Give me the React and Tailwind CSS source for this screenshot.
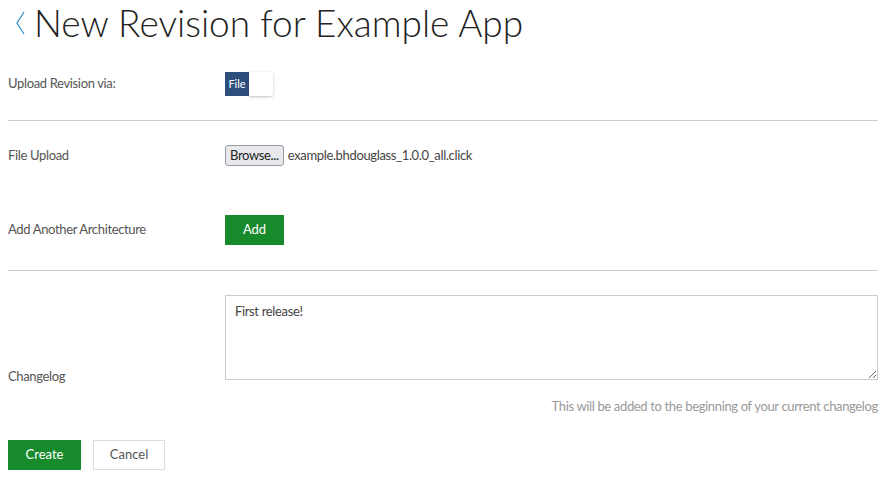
import React from 'react';

function Row({ label, children, className = '' }) {
  return (
    <div className={`flex items-center ${className}`}>
      <div className="w-[217px] shrink-0 text-[13px] tracking-[-0.35px] text-[#555]">{label}</div>
      <div className="flex-1">{children}</div>
    </div>
  );
}

export default function App() {
  return (
    <div className="pl-2 pr-[9px] bg-white min-h-screen font-['Lato',sans-serif]">
      {/* Header */}
      <div className="h-[45px] flex items-center">
        <svg width="12" height="24" viewBox="0 0 12 24" className="ml-[6px] mr-[8px]">
          <path d="M10 1 L3 12 L10 23" fill="none" stroke="#3b8fc4" strokeWidth="1.3" />
        </svg>
        <h1 className="text-[37px] font-light text-[#222] leading-none">New Revision for Example App</h1>
      </div>

      {/* Upload via */}
      <Row label="Upload Revision via:" className="mt-[27px] h-6">
        <div className="flex h-6">
          <div className="w-6 h-6 bg-[#2c4f7e] text-white text-[11px] flex items-center justify-center">File</div>
          <div className="w-6 h-6 bg-white rounded-r-[3px] shadow-[0_1px_3px_rgba(0,0,0,0.25)]"></div>
        </div>
      </Row>

      <hr className="mt-6 border-0 border-t border-[#ccc]" />

      {/* File upload */}
      <Row label="File Upload" className="mt-6 h-[21px]">
        <div className="flex items-center gap-1 text-[13px] tracking-[-0.35px] text-[#444]">
          <button className="h-[21px] px-[4px] bg-[#e9e9ed] border border-[#9a9aa5] rounded-[3px] text-[13px] tracking-[-0.35px] text-[#222]">Browse...</button>
          <span>example.bhdouglass_1.0.0_all.click</span>
        </div>
      </Row>

      {/* Add architecture */}
      <Row label="Add Another Architecture" className="mt-[49px] h-[30px]">
        <button className="h-[30px] w-[59px] bg-[#178a2b] text-white text-[13px]">Add</button>
      </Row>

      <hr className="mt-[25px] border-0 border-t border-[#ccc]" />

      {/* Changelog */}
      <div className="flex items-end mt-6">
        <div className="w-[217px] shrink-0 text-[13px] tracking-[-0.35px] text-[#555] leading-[18px] mb-[-5px]">Changelog</div>
        <textarea
          defaultValue="First release!"
          className="flex-1 h-[85px] border border-[#ccc] px-[9px] py-[6px] text-[13px] tracking-[-0.35px] text-[#444] outline-none"
        />
      </div>
      <div className="mt-[17px] text-right text-[13px] tracking-[-0.35px] text-[#999] leading-[18px]">
        This will be added to the beginning of your current changelog
      </div>

      {/* Actions */}
      <div className="mt-[25px] flex gap-3">
        <button className="h-[30px] w-[73px] bg-[#178a2b] text-white text-[13px]">Create</button>
        <button className="h-[30px] w-[72px] bg-white border border-[#ddd] text-[#555] text-[13px]">Cancel</button>
      </div>
    </div>
  );
}
